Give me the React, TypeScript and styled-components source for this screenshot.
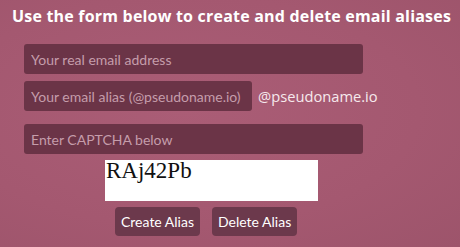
import React from "react";
import styled, { createGlobalStyle } from "styled-components";

const Global = createGlobalStyle`
  html, body { margin: 0; padding: 0; }
  body { background: #a55a72; width: 460px; height: 247px; overflow: hidden; }
`;

const Page = styled.div`
  width: 460px;
  height: 247px;
  box-sizing: border-box;
  background: radial-gradient(ellipse at 40% 45%, #aa5d76 0%, #a45870 60%, #9d546b 100%);
  padding-top: 6px;
  font-family: "Lato", sans-serif;
`;

const Title = styled.h1`
  margin: 0 0 0 12px;
  font-family: "Open Sans", sans-serif;
  font-weight: 700;
  font-size: 16px;
  letter-spacing: 0.2px;
  line-height: 20px;
  color: #ffffff;
  white-space: nowrap;
`;

const Form = styled.form`
  display: flex;
  flex-direction: column;
  padding-left: 24px;
  margin-top: 18px;
`;

const Row = styled.div<{ $gap?: number }>`
  display: flex;
  align-items: center;
  margin-bottom: ${(p) => p.$gap ?? 7}px;
`;

const Field = styled.input<{ $w: number }>`
  box-sizing: border-box;
  width: ${(p) => p.$w}px;
  height: 30px;
  padding: 0 7px;
  border: none;
  border-radius: 3px;
  background: #6b3447;
  color: #f0dde3;
  font-family: "Lato", sans-serif;
  font-size: 14px;
  outline: none;
  &::placeholder { color: #c59dab; }
`;

const Suffix = styled.span`
  margin-left: 6px;
  font-family: "Open Sans", sans-serif;
  font-size: 14.7px;
  color: #f6e9ed;
`;

const Captcha = styled.div`
  box-sizing: border-box;
  margin-left: 81px;
  width: 213px;
  height: 41px;
  background: #ffffff;
  font-family: "Liberation Serif", serif;
  font-size: 23px;
  line-height: 22px;
  color: #111;
  padding-left: 1px;
  margin-bottom: 6px;
`;

const Buttons = styled.div`
  display: flex;
  gap: 12px;
  margin-left: 91px;
`;

const Button = styled.button`
  height: 29px;
  padding: 0 6px;
  border: none;
  border-radius: 4px;
  background: #6c394c;
  color: #ffffff;
  font-family: "Lato", sans-serif;
  font-size: 14px;
  cursor: pointer;
`;

export default function App() {
  return (
    <>
      <Global />
      <Page>
        <Title>Use the form below to create and delete email aliases</Title>
        <Form onSubmit={(e) => e.preventDefault()}>
          <Row>
            <Field $w={339} placeholder="Your real email address" />
          </Row>
          <Row $gap={13}>
            <Field $w={228} placeholder="Your email alias (@pseudoname.io)" />
            <Suffix>@pseudoname.io</Suffix>
          </Row>
          <Row $gap={6}>
            <Field $w={339} placeholder="Enter CAPTCHA below" />
          </Row>
          <Captcha>RAj42Pb</Captcha>
          <Buttons>
            <Button type="button">Create Alias</Button>
            <Button type="button">Delete Alias</Button>
          </Buttons>
        </Form>
      </Page>
    </>
  );
}
